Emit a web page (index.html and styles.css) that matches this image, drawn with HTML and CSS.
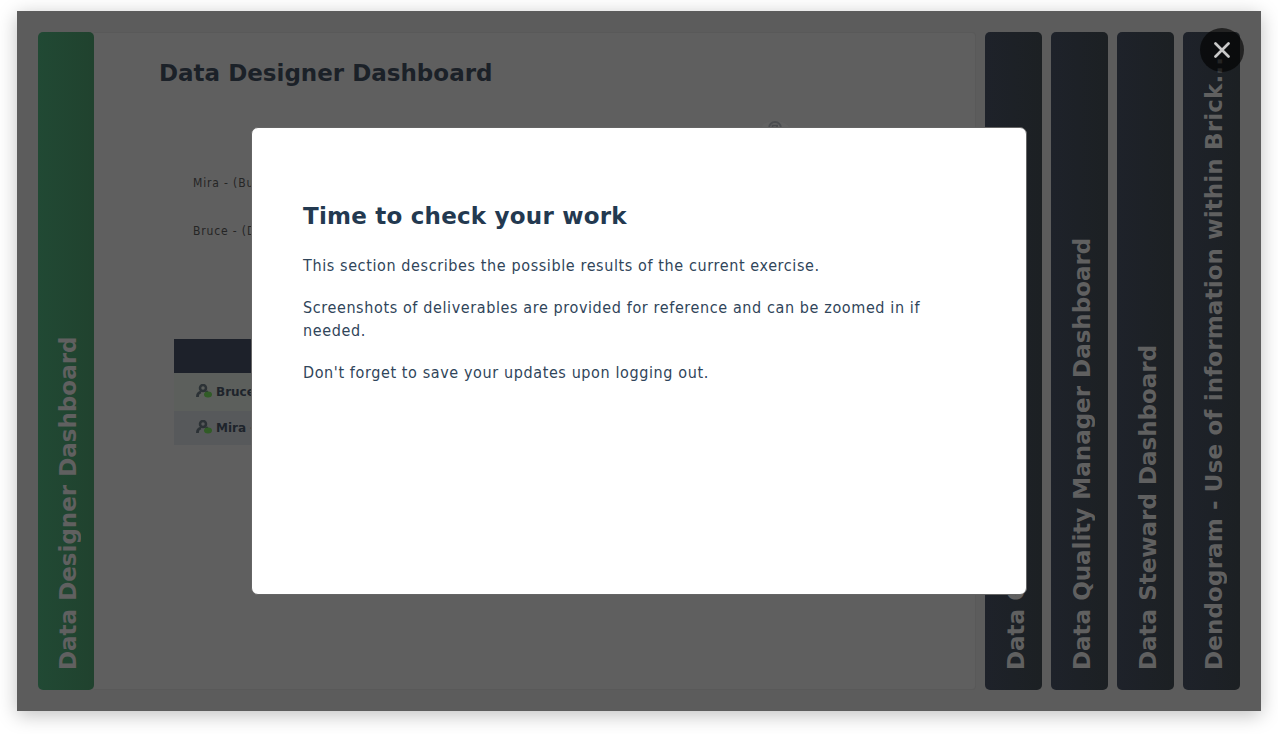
FILE: index.html
```
<!DOCTYPE html>
<html lang="en">
<head>
<meta charset="utf-8">
<title>Data Designer Dashboard</title>
<link rel="stylesheet" href="styles.css">
</head>
<body>
<main class="stage">
  <section class="tab tab-active"><span class="tab-label">Data Designer Dashboard</span></section>
  <section class="panel">
    <h1 class="panel-title">Data Designer Dashboard</h1>
    <div class="smile-row">
      <svg class="face" width="34" height="20" viewBox="0 0 34 20"><ellipse cx="17" cy="10" rx="14" ry="8" fill="#626262"/><circle cx="17" cy="9" r="6" fill="none" stroke="#4b4d50" stroke-width="1.8"/><path d="M14.5 6v4M19 6v4M14 6.500h6" stroke="#484a4d" stroke-width="1.600"/></svg>
    </div>
    <p class="person">Mira - (Business)</p>
    <p class="person">Bruce - (Data)</p>
    <div class="table">
      <div class="table-head"></div>
      <div class="table-row">
        <svg class="user" width="16" height="16" viewBox="0 0 16 16"><path d="M1.5 13v-1c0-2 1.500-3.500 3.500-4M10 7l3 4" fill="none" stroke="#2c3236" stroke-width="2.800"/><circle cx="7" cy="4" r="3" fill="none" stroke="#2c3236" stroke-width="2.500"/><ellipse cx="12" cy="10.500" rx="4" ry="3" fill="#315c27"/></svg>
        <b>Bruce - Data</b>
      </div>
      <div class="table-row row-alt">
        <svg class="user" width="16" height="16" viewBox="0 0 16 16"><path d="M1.5 13v-1c0-2 1.500-3.500 3.500-4M10 7l3 4" fill="none" stroke="#2c3236" stroke-width="2.800"/><circle cx="7" cy="4" r="3" fill="none" stroke="#2c3236" stroke-width="2.500"/><ellipse cx="12" cy="10.500" rx="4" ry="3" fill="#315c27"/></svg>
        <b>Mira - Business</b>
      </div>
    </div>
  </section>
  <section class="tab"><span class="tab-label">Data Owner Dashboard</span></section>
  <section class="tab"><span class="tab-label">Data Quality Manager Dashboard</span></section>
  <section class="tab"><span class="tab-label">Data Steward Dashboard</span></section>
  <section class="tab"><span class="tab-label tab-label-long">Dendogram - Use of information within Brick...</span></section>

  <div class="dialog" role="dialog">
    <h2 class="dialog-title">Time to check your work</h2>
    <p class="text">This section describes the possible results of the current exercise.</p>
    <p class="text">Screenshots of deliverables are provided for reference and can be zoomed in if<br>needed.</p>
    <p class="text">Don't forget to save your updates upon logging out.</p>
  </div>
  <button class="close" aria-label="Close">
    <svg width="16" height="16" viewBox="0 0 16 16"><path d="M1.500 1.500l13 13M14.500 1.500l-13 13" stroke="#c9c9c9" stroke-width="2.700" stroke-linecap="round"/></svg>
  </button>
</main>
</body>
</html>
```
FILE: styles.css
```
* { box-sizing: border-box; }
body { margin: 0; padding: 11px 17px; height: 734px; background: #fff; overflow: hidden; font-family: Verdana, "DejaVu Sans", sans-serif; }
h1, h2, p { margin: 0; }
.stage {
  position: relative;
  display: flex;
  width: 1244px;
  height: 700px;
  padding: 21px;
  background: #5c5c5c;
  box-shadow: 0 4px 18px rgba(0, 0, 0, .25);
}
.tab {
  display: flex;
  flex: none;
  justify-content: center;
  width: 57px;
  height: 658px;
  margin-left: 9px;
  padding: 20px 0 20px 4px;
  border-radius: 5px;
  background: linear-gradient(90deg, #1e222a, #1c2023);
  color: #606060;
}
.tab-active {
  width: 56px;
  margin-left: 0;
  background: linear-gradient(90deg, #214934, #20422e);
}
.tab-label {
  writing-mode: vertical-rl;
  transform: rotate(180deg);
  white-space: nowrap;
  font-size: 23px;
  font-weight: 700;
  line-height: 52px;
}
.tab-label-long { letter-spacing: .14px; }
.panel {
  flex: none;
  width: 882px;
  height: 658px;
  padding: 23px 65px;
  border: 1px solid #595959;
  border-left: 0;
  border-radius: 0 4px 4px 0;
  background: #5f5f5f;
}
.panel-title { color: #1b2128; font-size: 23px; line-height: 34px; white-space: nowrap; }
.smile-row { height: 60px; padding: 29px 0 0 599px; }
.face { display: block; }
.person { padding-left: 34px; height: 48px; font-size: 12px; font-stretch: condensed; letter-spacing: .85px; line-height: 66px; color: #252525; white-space: nowrap; }
.table { width: 620px; margin: 93px 0 0 15px; }
.table-head { height: 34px; background: #1d212a; }
.table-row { display: flex; align-items: center; gap: 4px; height: 38px; padding-left: 22px; font-size: 12px; color: #1e242b; background: #5c5f5c; }
.row-alt { height: 34px; background: #57595b; }
.dialog {
  position: absolute;
  left: 234px;
  top: 116px;
  width: 776px;
  height: 468px;
  padding: 72px 51px;
  border: 1px solid #656565;
  border-radius: 7px;
  background: #fff;
  color: #233950;
}
.dialog-title { margin-bottom: 22px; font-size: 23px; letter-spacing: .22px; line-height: 32px; }
.text { margin-bottom: 19px; font-size: 16px; font-stretch: condensed; letter-spacing: .61px; line-height: 23px; white-space: nowrap; color: #30455a; }
.close {
  position: absolute;
  left: 1183px;
  top: 17px;
  display: grid;
  place-items: center;
  width: 44px;
  height: 44px;
  padding: 0;
  border: 0;
  border-radius: 50%;
  background: rgba(0, 0, 0, .62);
}
```
